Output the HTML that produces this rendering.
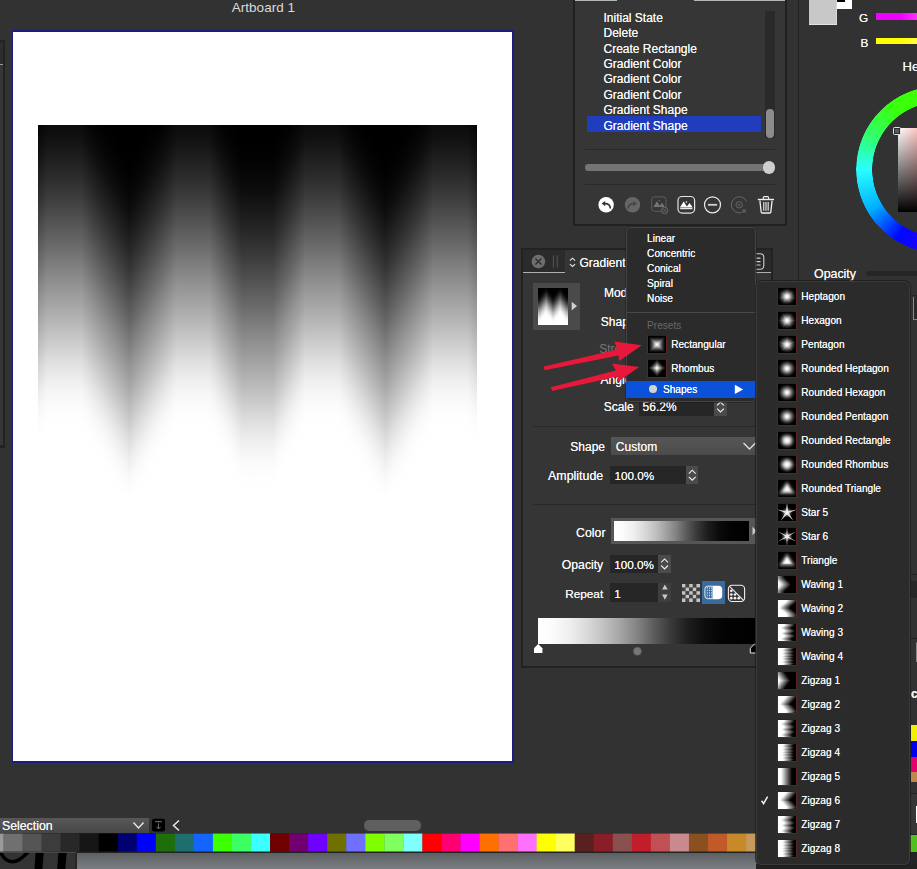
<!DOCTYPE html><html><head><meta charset="utf-8"><title>Gradient Shapes</title><style>
*{box-sizing:border-box;margin:0;padding:0}
html,body{width:917px;height:869px;overflow:hidden;background:#323232}
body{position:relative;font-family:"Liberation Sans",sans-serif;font-size:12px;color:#f2f2f2;line-height:1}
.a{position:absolute}
.t{position:absolute;white-space:nowrap;line-height:14px;height:14px;font-size:12px;color:#f4f4f4;text-shadow:0 0 .5px #f4f4f4}
.r{text-align:right}
.fld{position:absolute;background:#262626}
.stp{position:absolute;background:#4b4b4b}
.sep{position:absolute;height:1px;background:#282828}
.mi{position:absolute;white-space:nowrap;font-size:10.1px;line-height:12px;height:12px;color:#f6f6f6;margin-top:.9px;text-shadow:0 0 .25px #f6f6f6}
.ic{position:absolute;width:20px;height:20px;border:1px solid #5e2323;border-top-color:#3c1d1d;background:#000;overflow:hidden}
.ic svg{display:block}
</style></head><body>
<div class="t" style="left:163.4px;top:0.6px;width:200px;text-align:center;font-size:13.5px;color:#dadada;text-shadow:none">Artboard 1</div>
<div class="a" style="left:0;top:40px;width:5px;height:407.5px;background:#222"></div>
<div class="a" style="left:0;top:42px;width:3px;height:22px;background:#2d2d2d"></div>
<div class="a" style="left:0;top:64px;width:3px;height:1px;background:#9a9a9a"></div>
<div class="a" style="left:0;top:65px;width:3px;height:380px;background:#363636"></div>
<div class="a" style="left:11.7px;top:30.4px;width:502.1px;height:732.8px;background:#1d1d7c"></div><div class="a" style="left:13.1px;top:31.9px;width:498.8px;height:729.6px;background:#fff"></div>
<svg class="a" style="left:38.2px;top:124.8px" width="438.6" height="368.4" viewBox="38.2 124.8 438.6 368.4"><defs><linearGradient id="mg" gradientUnits="userSpaceOnUse" x1="0" y1="0" x2="0" y2="377.0"><stop offset="0.0" stop-color="rgb(0,0,0)"/><stop offset="0.05" stop-color="rgb(2,2,2)"/><stop offset="0.1" stop-color="rgb(7,7,7)"/><stop offset="0.15" stop-color="rgb(15,15,15)"/><stop offset="0.2" stop-color="rgb(27,27,27)"/><stop offset="0.25" stop-color="rgb(40,40,40)"/><stop offset="0.3" stop-color="rgb(55,55,55)"/><stop offset="0.35" stop-color="rgb(72,72,72)"/><stop offset="0.4" stop-color="rgb(90,90,90)"/><stop offset="0.45" stop-color="rgb(108,108,108)"/><stop offset="0.5" stop-color="rgb(128,128,128)"/><stop offset="0.55" stop-color="rgb(147,147,147)"/><stop offset="0.6" stop-color="rgb(165,165,165)"/><stop offset="0.65" stop-color="rgb(184,184,184)"/><stop offset="0.7" stop-color="rgb(203,203,203)"/><stop offset="0.75" stop-color="rgb(222,222,222)"/><stop offset="0.8" stop-color="rgb(238,238,238)"/><stop offset="0.85" stop-color="rgb(249,249,249)"/><stop offset="0.9" stop-color="rgb(254,254,254)"/><stop offset="0.95" stop-color="rgb(255,255,255)"/><stop offset="1.0" stop-color="rgb(255,255,255)"/></linearGradient></defs><rect x="0" y="-300" width="14.5" height="1200" fill="url(#mg)" transform="translate(34.60000000000002 101.10) skewY(-60.630)"/><rect x="0" y="-300" width="35.5" height="1200" fill="url(#mg)" transform="translate(47.60000000000002 78.00) skewY(0.000)"/><rect x="0" y="-300" width="49.5" height="1200" fill="url(#mg)" transform="translate(81.60000000000002 78.00) skewY(59.036)"/><rect x="0" y="-300" width="48.5" height="1200" fill="url(#mg)" transform="translate(129.60000000000002 158.00) skewY(-59.566)"/><rect x="0" y="-300" width="34.5" height="1200" fill="url(#mg)" transform="translate(176.60000000000002 78.00) skewY(0.000)"/><rect x="0" y="-300" width="33.900000000000006" height="1200" fill="url(#mg)" transform="translate(209.60000000000002 78.00) skewY(61.631)"/><rect x="0" y="-300" width="17.099999999999994" height="1200" fill="url(#mg)" transform="translate(242.00000000000003 138.00) skewY(0.000)"/><rect x="0" y="-300" width="17.100000000000023" height="1200" fill="url(#mg)" transform="translate(257.6 138.00) skewY(0.000)"/><rect x="0" y="-300" width="33.89999999999998" height="1200" fill="url(#mg)" transform="translate(273.20000000000005 138.00) skewY(-61.631)"/><rect x="0" y="-300" width="34.5" height="1200" fill="url(#mg)" transform="translate(305.6 78.00) skewY(0.000)"/><rect x="0" y="-300" width="48.5" height="1200" fill="url(#mg)" transform="translate(338.6 78.00) skewY(59.566)"/><rect x="0" y="-300" width="49.5" height="1200" fill="url(#mg)" transform="translate(385.6 158.00) skewY(-59.036)"/><rect x="0" y="-300" width="35.5" height="1200" fill="url(#mg)" transform="translate(433.6 78.00) skewY(0.000)"/><rect x="0" y="-300" width="14.5" height="1200" fill="url(#mg)" transform="translate(467.6 78.00) skewY(60.630)"/></svg>
<div class="a" style="left:0;top:818px;width:149px;height:15px;background:linear-gradient(#585858,#474747)"></div>
<div class="t" style="left:2px;top:819px;font-size:12.3px">Selection</div>
<svg class="a" style="left:130px;top:818px" width="70" height="15" viewBox="0 0 70 15"><path d="M3.5 4.5 L8.5 10 L13.5 4.5" fill="none" stroke="#e6e6e6" stroke-width="1.4"/><rect x="22" y="0.8" width="13" height="12.6" rx="2" fill="#000"/><path d="M25.3 3.6h6.4" stroke="#6e6e6e" stroke-width="1.2"/><path d="M28.5 5.3v5.5M26.3 8.7l2.2 2.2L30.7 8.7" fill="none" stroke="#6e6e6e" stroke-width="1"/><path d="M49 2.5 L43.5 7.5 L49 12.5" fill="none" stroke="#eaeaea" stroke-width="1.5"/></svg>
<div class="a" style="left:364px;top:820px;width:57px;height:11px;border-radius:5px;background:#5f5f5f"></div>
<svg class="a" style="left:0;top:833px" width="917" height="20" viewBox="0 0 917 20"><rect width="917" height="20" fill="#222"/><rect y="18.6" width="76" height="1.4" fill="#474747"/><rect x="0.00" y="0.5" width="3.80" height="18" fill="#9a9a9a"/><rect x="3.50" y="0.5" width="19.34" height="18" fill="#707070"/><rect x="22.54" y="0.5" width="19.34" height="18" fill="#555555"/><rect x="41.58" y="0.5" width="19.34" height="18" fill="#3c3c3c"/><rect x="60.62" y="0.5" width="19.34" height="18" fill="#282828"/><rect x="79.66" y="0.5" width="19.34" height="18" fill="#161616"/><rect x="98.70" y="0.5" width="19.34" height="18" fill="#000000"/><rect x="117.74" y="0.5" width="19.34" height="18" fill="#000070"/><rect x="136.78" y="0.5" width="19.34" height="18" fill="#0000ff"/><rect x="155.82" y="0.5" width="19.34" height="18" fill="#1e6e0a"/><rect x="174.86" y="0.5" width="19.34" height="18" fill="#1e6e6e"/><rect x="193.90" y="0.5" width="19.34" height="18" fill="#1464ff"/><rect x="212.94" y="0.5" width="19.34" height="18" fill="#3cff00"/><rect x="231.98" y="0.5" width="19.34" height="18" fill="#3cff64"/><rect x="251.02" y="0.5" width="19.34" height="18" fill="#3cffff"/><rect x="270.06" y="0.5" width="19.34" height="18" fill="#700000"/><rect x="289.10" y="0.5" width="19.34" height="18" fill="#700070"/><rect x="308.14" y="0.5" width="19.34" height="18" fill="#7000ff"/><rect x="327.18" y="0.5" width="19.34" height="18" fill="#707000"/><rect x="346.22" y="0.5" width="19.34" height="18" fill="#7070ff"/><rect x="365.26" y="0.5" width="19.34" height="18" fill="#80ff00"/><rect x="384.30" y="0.5" width="19.34" height="18" fill="#80ff60"/><rect x="403.34" y="0.5" width="19.34" height="18" fill="#80ffff"/><rect x="422.38" y="0.5" width="19.34" height="18" fill="#ff0000"/><rect x="441.42" y="0.5" width="19.34" height="18" fill="#ff0070"/><rect x="460.46" y="0.5" width="19.34" height="18" fill="#ff00ff"/><rect x="479.50" y="0.5" width="19.34" height="18" fill="#ff7000"/><rect x="498.54" y="0.5" width="19.34" height="18" fill="#ff7070"/><rect x="517.58" y="0.5" width="19.34" height="18" fill="#ff70ff"/><rect x="536.62" y="0.5" width="19.34" height="18" fill="#ffff00"/><rect x="555.66" y="0.5" width="19.34" height="18" fill="#ffff60"/><rect x="574.70" y="0.5" width="19.34" height="18" fill="#5a2020"/><rect x="593.74" y="0.5" width="19.34" height="18" fill="#8a1e28"/><rect x="612.78" y="0.5" width="19.34" height="18" fill="#8a5050"/><rect x="631.82" y="0.5" width="19.34" height="18" fill="#c01e2a"/><rect x="650.86" y="0.5" width="19.34" height="18" fill="#c05055"/><rect x="669.90" y="0.5" width="19.34" height="18" fill="#c88a8c"/><rect x="688.94" y="0.5" width="19.34" height="18" fill="#8a5020"/><rect x="707.98" y="0.5" width="19.34" height="18" fill="#c05a28"/><rect x="727.02" y="0.5" width="19.34" height="18" fill="#c88a28"/><rect x="746.06" y="0.5" width="19.34" height="18" fill="#c89a5a"/><rect x="765.10" y="0.5" width="19.34" height="18" fill="#c8a878"/><rect x="910" y="2" width="7" height="17" fill="#50c020"/></svg>
<div class="a" style="left:0;top:853px;width:77px;height:16px;background:#333"></div>
<div class="a" style="left:77px;top:853px;width:681px;height:16px;background:linear-gradient(#5c6062,#7b7f81)"></div><div class="a" style="left:758px;top:853px;width:159px;height:16px;background:#242424"></div>
<svg class="a" style="left:0;top:853px" width="77" height="16" viewBox="0 0 77 16"><path d="M0.5 -1.5 C3 5.5 8 9 13.5 8.6 C19 8.2 24 3.5 28.5 -1.5" fill="none" stroke="#000" stroke-width="3.5"/><path d="M35.5 0 L43.7 0 L42.4 16 L34.6 16Z" fill="#000"/><path d="M58.3 0 L66.6 0 L65.3 16 L57.2 16Z" fill="#000"/><rect x="75.2" y="0" width="1.8" height="16" fill="#262626"/></svg>
<div class="a" style="left:756px;top:864px;width:161px;height:5px;background:#222"></div>
<div class="a" style="left:573px;top:-2px;width:214px;height:228px;background:#363636;border:2px solid #212121"></div>
<div class="a" style="left:575px;top:0;width:42px;height:1px;background:#b4b4b4"></div>
<div class="a" style="left:694px;top:0;width:91px;height:1px;background:#b4b4b4"></div>
<div class="a" style="left:587px;top:116px;width:174px;height:16px;background:#1f3dbc"></div>
<div class="t" style="left:603.5px;top:10.8px">Initial State</div>
<div class="t" style="left:603.5px;top:26.2px">Delete</div>
<div class="t" style="left:603.5px;top:41.6px">Create Rectangle</div>
<div class="t" style="left:603.5px;top:57.0px">Gradient Color</div>
<div class="t" style="left:603.5px;top:72.4px">Gradient Color</div>
<div class="t" style="left:603.5px;top:87.8px">Gradient Color</div>
<div class="t" style="left:603.5px;top:103.2px">Gradient Shape</div>
<div class="t" style="left:603.5px;top:118.6px">Gradient Shape</div>
<div class="a" style="left:765px;top:11px;width:10px;height:127px;background:#2a2a2a"></div>
<div class="a" style="left:766px;top:109px;width:8px;height:29px;border-radius:4px;background:#8c8c8c"></div>
<div class="sep" style="left:585px;top:149px;width:190px"></div>
<div class="sep" style="left:585px;top:184px;width:190px"></div>
<div class="a" style="left:585px;top:164.4px;width:186px;height:6.6px;border-radius:3.3px;background:#747474"></div>
<div class="a" style="left:762.6px;top:161.4px;width:12.6px;height:12.6px;border-radius:6.3px;background:#cfcfcf"></div>
<svg class="a" style="left:594px;top:192px" width="190" height="26" viewBox="594 192 190 26"><circle cx="606.1" cy="204.7" r="7.7" fill="#fff"/><path d="M601.6 203.6 L605.2 200.9 L605.2 206.3Z" fill="#333"/><path d="M604.8 203.6 C608.5 203.4 610.3 205.4 610.3 208.4" fill="none" stroke="#333" stroke-width="1.7"/><circle cx="632.5" cy="204.7" r="7.7" fill="#666"/><path d="M637 203.6 L633.4 200.9 L633.4 206.3Z" fill="#454545"/><path d="M633.8 203.6 C630.1 203.4 628.3 205.4 628.3 208.4" fill="none" stroke="#454545" stroke-width="1.7"/><rect x="651.7" y="196.9" width="14.4" height="14.4" rx="3" fill="none" stroke="#5c5c5c" stroke-width="1"/><path d="M653.4 207 L657 201.2 L660.6 207Z M659.3 207 L662 202.6 L664.8 207Z" fill="#757575"/><circle cx="659.2" cy="200.8" r="0.7" fill="#757575"/><circle cx="664.6" cy="210.6" r="3.2" fill="#363636" stroke="#757575" stroke-width="0.8"/><path d="M663.1 209.1l3 3M666.1 209.1l-3 3" stroke="#757575" stroke-width="0.8"/><rect x="678" y="196.5" width="16.6" height="16.6" rx="4" fill="none" stroke="#e4e4e4" stroke-width="1.2"/><path d="M679.8 207.4 L683.7 201.6 L687.5 207.4Z M686.2 207.4 L689.5 203 L692.8 207.4Z" fill="#fff"/><circle cx="686.4" cy="202" r="0.8" fill="#fff"/><rect x="680.2" y="208.1" width="12.2" height="1.1" fill="#fff"/><circle cx="712.5" cy="204.8" r="8" fill="none" stroke="#ececec" stroke-width="1.2"/><rect x="708" y="203.9" width="9.1" height="1.8" fill="#d2d2d2"/><path d="M746.6 201.3 A8 8 0 1 0 741.5 212.5" fill="none" stroke="#686868" stroke-width="1"/><circle cx="739.2" cy="204.8" r="3.2" fill="none" stroke="#686868" stroke-width="1"/><circle cx="739.2" cy="204.8" r="1" fill="#686868"/><path d="M742.4 209.3l3.4 3.4M745.8 209.3l-3.4 3.4" stroke="#686868" stroke-width="1.1"/><path d="M763.3 199 V197.6 Q763.3 196.6 764.3 196.6 H767.6 Q768.6 196.6 768.6 197.6 V199" fill="none" stroke="#f0f0f0" stroke-width="1.1"/><rect x="757.8" y="198.8" width="16.2" height="1.4" fill="#f0f0f0"/><path d="M759.9 200.6 L761.2 212.2 Q761.3 213 762.2 213 H769.8 Q770.7 213 770.8 212.2 L772.1 200.6" fill="none" stroke="#f0f0f0" stroke-width="1.3"/><path d="M763.7 202 V210.8 M765.95 202 V210.8 M768.2 202 V210.8" stroke="#c8c8c8" stroke-width="1.4"/></svg>
<div class="a" style="left:797.5px;top:0;width:1.5px;height:869px;background:#212121"></div>
<div class="a" style="left:809px;top:0;width:27.5px;height:24.5px;background:#c8c8c8;border-bottom:1px solid #e2e2e2;border-right:1px solid #d8d8d8"></div>
<div class="a" style="left:836.5px;top:0;width:15.5px;height:9px;background:#fff"></div>
<div class="a" style="left:836.5px;top:0;width:8px;height:1.5px;background:#000"></div>
<div class="t" style="left:859px;top:10.8px;font-size:11.8px;text-shadow:0 0 .6px #fff">G</div>
<div class="t" style="left:860.5px;top:35.8px;font-size:11.8px;text-shadow:0 0 .6px #fff">B</div>
<div class="a" style="left:876px;top:13.4px;width:41px;height:6.4px;background:linear-gradient(90deg,#f000ff 60%,#ff30ff)"></div>
<div class="a" style="left:876px;top:38.2px;width:41px;height:6.2px;background:linear-gradient(90deg,#ffff00 60%,#ffff40)"></div>
<div class="t" style="left:902.5px;top:60px;font-size:13px">Hex</div>
<div class="a" style="left:855.5px;top:85.8px;width:167.2px;height:167.2px;border-radius:50%;background:conic-gradient(from 90deg,#ff0000,#ff00ff 55deg,#1c00ff 100deg,#0008ff 122deg,#00b0ff 150deg,#28ffff 180deg,#30ff70 205deg,#38ff10 232deg,#40ff00 262deg,#ffff00 305deg,#ff0000 360deg);-webkit-mask:radial-gradient(circle closest-side,transparent 67px,#000 67.6px,#000 83.2px,transparent 83.8px);mask:radial-gradient(circle closest-side,transparent 67px,#000 67.6px,#000 83.2px,transparent 83.8px)"></div>
<div class="a" style="left:898px;top:128px;width:84px;height:84px;background:linear-gradient(to bottom,rgba(0,0,0,0),#000),linear-gradient(to right,#fff,#f00)"></div>
<div class="a" style="left:893.3px;top:127.3px;width:8px;height:8px;border:1.2px solid #e4e4e4;border-radius:1.5px;outline:1px solid #2a2a2a;outline-offset:-2.2px;background:#5a5a5a"></div>
<div class="t" style="left:814px;top:266.8px;font-size:12.4px">Opacity</div>
<div class="a" style="left:866px;top:270.5px;width:60px;height:5px;border-radius:2.5px;background:#262626"></div>
<div class="a" style="left:911px;top:294.5px;width:6px;height:1px;background:#232323"></div>
<div class="a" style="left:913px;top:297px;width:6px;height:23px;background:#292929;border-left:1px solid #8a8a8a;border-bottom:1px solid #8a8a8a"></div>
<div class="a" style="left:911px;top:573.5px;width:6px;height:1px;background:#232323"></div>
<div class="a" style="left:911px;top:580.5px;width:6px;height:17px;background:#272727"></div>
<div class="a" style="left:911px;top:638px;width:6px;height:1px;background:#1f1f1f"></div>
<div class="a" style="left:915.5px;top:642px;width:4px;height:20px;border-left:1px solid #8a8a8a;border-bottom:1px solid #8a8a8a;border-top:1px solid #4a4a4a"></div>
<div class="t" style="left:911px;top:687px;font-weight:bold;font-size:12px">ci</div>
<div class="a" style="left:911px;top:724.5px;width:6px;height:16.3px;background:#f0f000"></div>
<div class="a" style="left:911px;top:740.8px;width:6px;height:16px;background:#0000f0"></div>
<div class="a" style="left:911px;top:756.8px;width:6px;height:15.5px;background:#e6006e"></div>
<div class="a" style="left:911px;top:772.3px;width:6px;height:10.2px;background:#c08848"></div>
<div class="a" style="left:911px;top:793px;width:6px;height:1px;background:#232323"></div>
<div class="a" style="left:911px;top:794px;width:6px;height:40px;background:#363636"></div>
<div class="a" style="left:916px;top:806px;width:1px;height:17px;background:#fff"></div>
<div class="a" style="left:521px;top:248px;width:252px;height:420px;background:#353535;border:2px solid #222"></div>
<div class="a" style="left:523px;top:250px;width:248px;height:22px;background:#2b2b2b"></div>
<div class="a" style="left:565px;top:250px;width:180px;height:23px;background:#353535"></div>
<div class="a" style="left:523px;top:272px;width:42px;height:1px;background:#b0b0b0"></div>
<div class="a" style="left:745px;top:272px;width:26px;height:1px;background:#b0b0b0"></div>
<svg class="a" style="left:523px;top:250px" width="248" height="22" viewBox="523 250 248 22"><circle cx="538.4" cy="261.5" r="6.8" fill="#6e6e6e"/><path d="M535.4 258.5l6 6M541.4 258.5l-6 6" stroke="#2b2b2b" stroke-width="1.3"/><path d="M553.4 255.3V267.6M557.2 255.3V267.6" stroke="#565656" stroke-width="1"/><path d="M569.9 260.6L572.5 258.2L575.1 260.6M569.9 264.1L572.5 266.5L575.1 264.1" fill="none" stroke="#e8e8e8" stroke-width="1.1"/><rect x="747.5" y="253.8" width="16.3" height="15.5" rx="3.5" fill="none" stroke="#d0d0d0" stroke-width="1.1"/><path d="M751 258.2H760.5M751 261.6H760.5M751 265H760.5" stroke="#d0d0d0" stroke-width="1.2"/></svg>
<div class="t" style="left:579.5px;top:256.2px;font-size:12px">Gradient</div>
<div class="a" style="left:532.7px;top:282.6px;width:47.5px;height:47.2px;background:#4a4a4a"></div>
<svg class="a" style="left:537.5px;top:287.5px" width="30.2" height="37.5" viewBox="537.5 287.5 30.2 37.5"><defs><linearGradient id="tg" gradientUnits="userSpaceOnUse" x1="0" y1="0" x2="0" y2="28"><stop offset="0.0" stop-color="rgb(0,0,0)"/><stop offset="0.1" stop-color="rgb(7,7,7)"/><stop offset="0.2" stop-color="rgb(27,27,27)"/><stop offset="0.3" stop-color="rgb(55,55,55)"/><stop offset="0.4" stop-color="rgb(90,90,90)"/><stop offset="0.5" stop-color="rgb(128,128,128)"/><stop offset="0.6" stop-color="rgb(165,165,165)"/><stop offset="0.7" stop-color="rgb(200,200,200)"/><stop offset="0.8" stop-color="rgb(228,228,228)"/><stop offset="0.9" stop-color="rgb(248,248,248)"/><stop offset="1.0" stop-color="rgb(255,255,255)"/></linearGradient></defs><rect x="0" y="-60" width="8.50" height="200" fill="url(#tg)" transform="translate(531.6 285.8) skewY(52.13)"/><rect x="0" y="-60" width="8.50" height="200" fill="url(#tg)" transform="translate(538.6 294.8) skewY(-52.13)"/><rect x="0" y="-60" width="8.50" height="200" fill="url(#tg)" transform="translate(545.6 285.8) skewY(52.13)"/><rect x="0" y="-60" width="8.50" height="200" fill="url(#tg)" transform="translate(552.6 294.8) skewY(-52.13)"/><rect x="0" y="-60" width="8.50" height="200" fill="url(#tg)" transform="translate(559.6 285.8) skewY(52.13)"/><rect x="0" y="-60" width="8.50" height="200" fill="url(#tg)" transform="translate(566.6 294.8) skewY(-52.13)"/></svg>
<svg class="a" style="left:571px;top:300px" width="7" height="12" viewBox="0 0 7 12"><path d="M0.7 1.7L6 6.1L0.7 10.5Z" fill="#cfcfcf"/></svg>
<div class="t" style="left:603.9px;top:286.1px">Mode</div>
<div class="t" style="left:600.8px;top:314.5px">Shape</div>
<div class="t" style="left:599.2px;top:342px;color:#777;text-shadow:none">Stretch</div>
<div class="t" style="left:600.6px;top:372.6px">Angle</div>
<div class="t" style="left:603.7px;top:400.1px">Scale</div>
<div class="fld" style="left:639px;top:398px;width:75px;height:18px"></div>
<div class="t" style="left:642.6px;top:400.1px">56.2%</div>
<div class="stp" style="left:714px;top:398px;width:13px;height:18px"><svg width="13" height="18" viewBox="0 0 13 18" style="display:block"><path d="M3.1 7.4L6.5 4.0L9.9 7.4M3.1 10.6L6.5 14.0L9.9 10.6" fill="none" stroke="#f0f0f0" stroke-width="1.1"/></svg></div>
<div class="sep" style="left:532.5px;top:426px;width:238px"></div>
<div class="t r" style="left:540px;width:65px;top:440.3px">Shape</div>
<div class="a" style="left:610.8px;top:437px;width:160px;height:18px;background:linear-gradient(#565656,#4b4b4b)"></div>
<div class="t" style="left:615.8px;top:440.3px">Custom</div>
<svg class="a" style="left:740px;top:440px" width="16" height="12" viewBox="0 0 16 12"><path d="M3.5 3L9.5 9L15.5 3" fill="none" stroke="#e0e0e0" stroke-width="1.3"/></svg>
<div class="t r" style="left:520px;width:83.2px;top:468.6px;font-size:12.4px">Amplitude</div>
<div class="fld" style="left:610px;top:465.5px;width:76px;height:18.4px"></div>
<div class="t" style="left:614.5px;top:468.6px;font-size:11.7px">100.0%</div>
<div class="stp" style="left:685.5px;top:465.5px;width:12.5px;height:18.4px"><svg width="12.5" height="18.4" viewBox="0 0 12.5 18.4" style="display:block"><path d="M2.85 7.6L6.25 4.199999999999999L9.65 7.6M2.85 10.799999999999999L6.25 14.2L9.65 10.799999999999999" fill="none" stroke="#f0f0f0" stroke-width="1.1"/></svg></div>
<div class="sep" style="left:532.5px;top:504px;width:238px"></div>
<div class="t r" style="left:540px;width:65.5px;top:525.6px;font-size:12.3px">Color</div>
<div class="a" style="left:610.8px;top:517.6px;width:160px;height:26.8px;background:#565656"></div>
<div class="a" style="left:614.2px;top:520.8px;width:135px;height:20px;background:linear-gradient(90deg,#fff 0%,#fcfcfc 6%,#eee 15%,#d8d8d8 23%,#bfbfbf 31%,#a4a4a4 38%,#828282 46%,#5e5e5e 53%,#3a3a3a 61%,#1e1e1e 69%,#0c0c0c 77%,#030303 86%,#000 100%)"></div>
<svg class="a" style="left:752px;top:526px" width="5" height="10" viewBox="0 0 5 10"><path d="M0.5 0.8L4.6 5L0.5 9.2Z" fill="#c8c8c8"/></svg>
<div class="t r" style="left:540px;width:63.2px;top:558px;font-size:12.2px">Opacity</div>
<div class="fld" style="left:610px;top:555.3px;width:48px;height:17.8px"></div>
<div class="t" style="left:614.3px;top:557.6px;font-size:11.7px">100.0%</div>
<div class="stp" style="left:657.6px;top:555.3px;width:13.2px;height:17.8px"><svg width="13.2" height="17.8" viewBox="0 0 13.2 17.8" style="display:block"><path d="M3.1999999999999997 7.300000000000001L6.6 3.9000000000000004L10.0 7.300000000000001M3.1999999999999997 10.5L6.6 13.9L10.0 10.5" fill="none" stroke="#f0f0f0" stroke-width="1.1"/></svg></div>
<div class="t r" style="left:540px;width:63.2px;top:587px;font-size:11.8px">Repeat</div>
<div class="fld" style="left:610px;top:583.2px;width:48px;height:18.6px"></div>
<div class="t" style="left:614.3px;top:586.6px;font-size:11.7px">1</div>
<div class="a" style="left:657.6px;top:583.2px;width:13.3px;height:18.6px;background:#3e3e3e"></div>
<svg class="a" style="left:657.6px;top:583.2px" width="13.3" height="18.6" viewBox="0 0 13.3 18.6"><path d="M4.1 6.6L6.9 1.5L9.7 6.6ZM4.1 11.6L6.9 16.8L9.7 11.6Z" fill="#c8c8c8"/></svg>
<svg class="a" style="left:681.7px;top:583.7px" width="18" height="18" viewBox="0 0 18 18"><rect x="0.0" y="0.0" width="3.65" height="3.65" fill="#c4c4c4"/><rect x="3.6" y="0.0" width="3.65" height="3.65" fill="#424242"/><rect x="7.2" y="0.0" width="3.65" height="3.65" fill="#c4c4c4"/><rect x="10.8" y="0.0" width="3.65" height="3.65" fill="#424242"/><rect x="14.4" y="0.0" width="3.65" height="3.65" fill="#c4c4c4"/><rect x="0.0" y="3.6" width="3.65" height="3.65" fill="#424242"/><rect x="3.6" y="3.6" width="3.65" height="3.65" fill="#c4c4c4"/><rect x="7.2" y="3.6" width="3.65" height="3.65" fill="#424242"/><rect x="10.8" y="3.6" width="3.65" height="3.65" fill="#c4c4c4"/><rect x="14.4" y="3.6" width="3.65" height="3.65" fill="#424242"/><rect x="0.0" y="7.2" width="3.65" height="3.65" fill="#c4c4c4"/><rect x="3.6" y="7.2" width="3.65" height="3.65" fill="#424242"/><rect x="7.2" y="7.2" width="3.65" height="3.65" fill="#c4c4c4"/><rect x="10.8" y="7.2" width="3.65" height="3.65" fill="#424242"/><rect x="14.4" y="7.2" width="3.65" height="3.65" fill="#c4c4c4"/><rect x="0.0" y="10.8" width="3.65" height="3.65" fill="#424242"/><rect x="3.6" y="10.8" width="3.65" height="3.65" fill="#c4c4c4"/><rect x="7.2" y="10.8" width="3.65" height="3.65" fill="#424242"/><rect x="10.8" y="10.8" width="3.65" height="3.65" fill="#c4c4c4"/><rect x="14.4" y="10.8" width="3.65" height="3.65" fill="#424242"/><rect x="0.0" y="14.4" width="3.65" height="3.65" fill="#c4c4c4"/><rect x="3.6" y="14.4" width="3.65" height="3.65" fill="#424242"/><rect x="7.2" y="14.4" width="3.65" height="3.65" fill="#c4c4c4"/><rect x="10.8" y="14.4" width="3.65" height="3.65" fill="#424242"/><rect x="14.4" y="14.4" width="3.65" height="3.65" fill="#c4c4c4"/></svg>
<div class="a" style="left:702px;top:581.3px;width:22.8px;height:22.8px;background:#3a6b9f"></div>
<svg class="a" style="left:702px;top:581.3px" width="22.8" height="22.8" viewBox="702 581.3 22.8 22.8"><path d="M712.5 586 H718.6 Q722.2 586 722.2 589.6 V595.9 Q722.2 599.5 718.6 599.5 H712.5Z" fill="#fff"/><path d="M712.5 586.5 H707.5 Q704.9 586.5 704.9 589.6 V595.9 Q704.9 599 707.5 599 H712.5" fill="none" stroke="#e8eef5" stroke-width="1"/><path d="M707.3 587.5V598" stroke="#dfe8f2" stroke-width="0.9" stroke-dasharray="1.5 1"/><path d="M709.5 587.5V598" stroke="#dfe8f2" stroke-width="0.9" stroke-dasharray="1.5 1"/><path d="M711.6 587.5V598" stroke="#dfe8f2" stroke-width="0.9" stroke-dasharray="1.5 1"/></svg>
<svg class="a" style="left:727px;top:583.5px" width="19" height="19" viewBox="727 583.5 19 19"><rect x="728.4" y="584.8" width="16.2" height="16.2" rx="3.6" fill="none" stroke="#f0f0f0" stroke-width="1.1"/><path d="M729.3 585.7L743.8 600.2" stroke="#f0f0f0" stroke-width="1.1"/><circle cx="731.3" cy="590.3" r="1.35" fill="#f0f0f0"/><circle cx="731.3" cy="594" r="1.35" fill="#f0f0f0"/><circle cx="731.3" cy="597.7" r="1.35" fill="#f0f0f0"/><circle cx="735" cy="594" r="1.35" fill="#f0f0f0"/><circle cx="735" cy="597.7" r="1.35" fill="#f0f0f0"/><circle cx="738.7" cy="597.7" r="1.35" fill="#f0f0f0"/></svg>
<div class="a" style="left:538.2px;top:617.8px;width:217px;height:25.8px;background:linear-gradient(90deg,#fff 0%,#fcfcfc 6%,#eee 15%,#d8d8d8 23%,#bfbfbf 31%,#a4a4a4 38%,#828282 46%,#5e5e5e 53%,#3a3a3a 61%,#1e1e1e 69%,#0c0c0c 77%,#030303 86%,#000 100%)"></div>
<svg class="a" style="left:532px;top:643px" width="230" height="14" viewBox="532 643 230 14"><path d="M534 648.2L538.2 644L542.4 648.2V653H534Z" fill="#fff"/><circle cx="637.4" cy="651.3" r="4" fill="#777" stroke="#5a5a5a" stroke-width="0.6"/><path d="M750.3 648.2L754.5 644L758.7 648.2V653H750.3Z" fill="#000" stroke="#e8e8e8" stroke-width="1"/></svg>
<div class="a" style="left:626px;top:227px;width:130px;height:174.5px;background:#2b2b2b;border-radius:4.5px;box-shadow:inset 0 0 0 1px rgba(255,255,255,.12),0 0 0 .5px #1c1c1c"></div>
<div class="mi" style="left:647.1px;top:232.3px">Linear</div>
<div class="mi" style="left:647.1px;top:247.3px">Concentric</div>
<div class="mi" style="left:647.1px;top:262.4px">Conical</div>
<div class="mi" style="left:647.1px;top:277.4px">Spiral</div>
<div class="mi" style="left:647.1px;top:292.4px">Noise</div>
<div class="a" style="left:626.5px;top:311.6px;width:129px;height:1px;background:#484848"></div>
<div class="mi" style="left:647.1px;top:319.4px;color:#686868;text-shadow:none">Presets</div>
<svg class="a" width="0" height="0" style="left:0;top:0"><defs><radialGradient id="gl"><stop offset="0" stop-color="#fff"/><stop offset=".1" stop-color="#fdfdfd"/><stop offset=".3" stop-color="#c0c0c0"/><stop offset=".5" stop-color="#747474"/><stop offset=".72" stop-color="#303030"/><stop offset=".9" stop-color="#0a0a0a"/><stop offset="1" stop-color="#000"/></radialGradient></defs></svg>
<div class="ic" style="left:647.3px;top:334.6px;height:19px"><div style="width:18px;height:17px;background:linear-gradient(90deg,rgb(0,0,0) 0%,rgb(0,0,0) 5%,rgb(36,36,36) 15%,rgb(92,92,92) 25%,rgb(165,165,165) 35%,rgb(228,228,228) 43%,rgb(255,255,255) 50%,rgb(228,228,228) 57%,rgb(165,165,165) 65%,rgb(92,92,92) 75%,rgb(36,36,36) 85%,rgb(0,0,0) 95%,rgb(0,0,0) 100%),linear-gradient(180deg,rgb(0,0,0) 0%,rgb(0,0,0) 5%,rgb(36,36,36) 15%,rgb(92,92,92) 25%,rgb(165,165,165) 35%,rgb(228,228,228) 43%,rgb(255,255,255) 50%,rgb(228,228,228) 57%,rgb(165,165,165) 65%,rgb(92,92,92) 75%,rgb(36,36,36) 85%,rgb(0,0,0) 95%,rgb(0,0,0) 100%);background-blend-mode:darken;"></div></div>
<div class="mi" style="left:671.2px;top:338.4px">Rectangular</div>
<div class="ic" style="left:647.3px;top:358.6px;height:19px"><div style="position:absolute;left:-9px;top:-8.5px;width:36px;height:34px;background:linear-gradient(90deg,#000 0%,rgb(0,0,0) 25.0%,rgb(0,0,0) 27.5%,rgb(36,36,36) 32.5%,rgb(92,92,92) 37.5%,rgb(165,165,165) 42.5%,rgb(228,228,228) 46.5%,rgb(255,255,255) 50.0%,rgb(228,228,228) 53.5%,rgb(165,165,165) 57.5%,rgb(92,92,92) 62.5%,rgb(36,36,36) 67.5%,rgb(0,0,0) 72.5%,rgb(0,0,0) 75.0%,#000 100%),linear-gradient(180deg,#000 0%,rgb(0,0,0) 25.0%,rgb(0,0,0) 27.5%,rgb(36,36,36) 32.5%,rgb(92,92,92) 37.5%,rgb(165,165,165) 42.5%,rgb(228,228,228) 46.5%,rgb(255,255,255) 50.0%,rgb(228,228,228) 53.5%,rgb(165,165,165) 57.5%,rgb(92,92,92) 62.5%,rgb(36,36,36) 67.5%,rgb(0,0,0) 72.5%,rgb(0,0,0) 75.0%,#000 100%);background-blend-mode:darken;transform:rotate(45deg) scale(.80,.847)"></div></div>
<div class="mi" style="left:671.2px;top:362.3px">Rhombus</div>
<div class="a" style="left:626px;top:381px;width:130px;height:17px;background:#0b51d9"></div>
<div class="a" style="left:649.2px;top:385.4px;width:7.4px;height:7.4px;border-radius:50%;background:#d2d2d2"></div>
<div class="mi" style="left:663px;top:382.8px;color:#fff">Shapes</div>
<svg class="a" style="left:734px;top:384px" width="10" height="11" viewBox="0 0 10 11"><path d="M0.8 0.8L9.2 5.4L0.8 10Z" fill="#fff"/></svg>
<svg class="a" style="left:530px;top:330px" width="130" height="70" viewBox="530 330 130 70"><path d="M543.9 366.6 L617.4 349.6 L614.3 341.5 L641.8 345.3 L619.2 361 L618.4 355.4 L544.4 370.2Z" fill="#e8183a"/><path d="M550.8 387.3 L616 370.6 L611.9 363.6 L639.3 367 L617.4 382.1 L617.6 376.4 L552 390.9Z" fill="#e8183a"/></svg>
<div class="a" style="left:756px;top:280.5px;width:154.2px;height:584px;background:#2b2b2b;border-radius:5.5px;box-shadow:inset 0 0 0 1px rgba(255,255,255,.08),0 0 0 .7px #1a1a1a"></div>
<div class="ic" style="left:777px;top:286.9px;height:19px"><svg width="18" height="17" viewBox="0 0 18 18" preserveAspectRatio="none"><rect width="18" height="18" fill="#000"/><rect width="18" height="18" fill="url(#gl)"/><polygon points="9.00,-0.50 9.56,7.83 16.43,3.08 10.27,8.71 18.26,11.11 10.02,9.81 13.12,17.56 9.00,10.30 4.88,17.56 7.98,9.81 -0.26,11.11 7.73,8.71 1.57,3.08 8.44,7.83" fill="#fff" opacity=".22" style="filter:blur(.6px)"/></svg></div>
<div class="mi" style="left:801.3px;top:290.3px">Heptagon</div>
<div class="ic" style="left:777px;top:310.9px;height:19px"><svg width="18" height="17" viewBox="0 0 18 18" preserveAspectRatio="none"><rect width="18" height="18" fill="#000"/><rect width="18" height="18" fill="url(#gl)"/><polygon points="18.50,9.00 10.13,9.65 13.75,17.23 9.00,10.30 4.25,17.23 7.87,9.65 -0.50,9.00 7.87,8.35 4.25,0.77 9.00,7.70 13.75,0.77 10.13,8.35" fill="#fff" opacity=".22" style="filter:blur(.6px)"/></svg></div>
<div class="mi" style="left:801.3px;top:314.3px">Hexagon</div>
<div class="ic" style="left:777px;top:334.9px;height:19px"><svg width="18" height="17" viewBox="0 0 18 18" preserveAspectRatio="none"><rect width="18" height="18" fill="#000"/><rect width="18" height="18" fill="url(#gl)"/><polygon points="9.00,-0.50 9.76,7.95 18.04,6.06 10.24,9.40 14.58,16.69 9.00,10.30 3.42,16.69 7.76,9.40 -0.04,6.06 8.24,7.95" fill="#fff" opacity=".22" style="filter:blur(.6px)"/></svg></div>
<div class="mi" style="left:801.3px;top:338.3px">Pentagon</div>
<div class="ic" style="left:777px;top:358.9px;height:19px"><svg width="18" height="17" viewBox="0 0 18 18" preserveAspectRatio="none"><rect width="18" height="18" fill="#000"/><rect width="18" height="18" fill="url(#gl)"/></svg></div>
<div class="mi" style="left:801.3px;top:362.3px">Rounded Heptagon</div>
<div class="ic" style="left:777px;top:382.9px;height:19px"><svg width="18" height="17" viewBox="0 0 18 18" preserveAspectRatio="none"><rect width="18" height="18" fill="#000"/><rect width="18" height="18" fill="url(#gl)"/></svg></div>
<div class="mi" style="left:801.3px;top:386.3px">Rounded Hexagon</div>
<div class="ic" style="left:777px;top:406.9px;height:19px"><svg width="18" height="17" viewBox="0 0 18 18" preserveAspectRatio="none"><rect width="18" height="18" fill="#000"/><rect width="18" height="18" fill="url(#gl)"/></svg></div>
<div class="mi" style="left:801.3px;top:410.3px">Rounded Pentagon</div>
<div class="ic" style="left:777px;top:430.9px;height:19px"><svg width="18" height="17" viewBox="0 0 18 18" preserveAspectRatio="none"><rect width="18" height="18" fill="#000"/><rect width="18" height="18" fill="url(#gl)"/><rect x="5" y="5" width="8" height="8" fill="#fff" opacity=".4" style="filter:blur(1.2px)"/></svg></div>
<div class="mi" style="left:801.3px;top:434.3px">Rounded Rectangle</div>
<div class="ic" style="left:777px;top:454.9px;height:19px"><svg width="18" height="17" viewBox="0 0 18 18" preserveAspectRatio="none"><rect width="18" height="18" fill="#000"/><rect width="18" height="18" fill="url(#gl)"/><polygon points="9,3.5 14.5,9 9,14.5 3.5,9" fill="#fff" opacity=".4" style="filter:blur(1.2px)"/></svg></div>
<div class="mi" style="left:801.3px;top:458.3px">Rounded Rhombus</div>
<div class="ic" style="left:777px;top:478.9px;height:19px"><svg width="18" height="17" viewBox="0 0 18 18" preserveAspectRatio="none"><rect width="18" height="18" fill="#000"/><polygon points="9,1.5 17,14.6 1,14.6" fill="#9a9a9a" style="filter:blur(1.8px)"/><polygon points="9,4.8 13.2,12.4 4.8,12.4" fill="#fff" style="filter:blur(1.3px)"/></svg></div>
<div class="mi" style="left:801.3px;top:482.3px">Rounded Triangle</div>
<div class="ic" style="left:777px;top:502.9px;height:19px"><svg width="18" height="17" viewBox="0 0 18 18" preserveAspectRatio="none"><rect width="18" height="18" fill="#000"/><circle cx="9" cy="9" r="6" fill="url(#gl)" opacity=".8"/><polygon points="9.00,-1.50 10.18,7.38 18.99,5.76 10.90,9.62 15.17,17.49 9.00,11.00 2.83,17.49 7.10,9.62 -0.99,5.76 7.82,7.38" fill="#fff" opacity=".8" style="filter:blur(.5px)"/></svg></div>
<div class="mi" style="left:801.3px;top:506.3px">Star 5</div>
<div class="ic" style="left:777px;top:526.9px;height:19px"><svg width="18" height="17" viewBox="0 0 18 18" preserveAspectRatio="none"><rect width="18" height="18" fill="#000"/><circle cx="9" cy="9" r="6" fill="url(#gl)" opacity=".8"/><polygon points="9.00,-1.50 9.70,7.79 18.09,3.75 10.40,9.00 18.09,14.25 9.70,10.21 9.00,19.50 8.30,10.21 -0.09,14.25 7.60,9.00 -0.09,3.75 8.30,7.79" fill="#fff" opacity=".8" style="filter:blur(.5px)"/></svg></div>
<div class="mi" style="left:801.3px;top:530.3px">Star 6</div>
<div class="ic" style="left:777px;top:550.9px;height:19px"><svg width="18" height="17" viewBox="0 0 18 18" preserveAspectRatio="none"><rect width="18" height="18" fill="#000"/><polygon points="9,1.5 17,14.6 1,14.6" fill="#9a9a9a" style="filter:blur(1.8px)"/><polygon points="9,4.8 13.2,12.4 4.8,12.4" fill="#fff" style="filter:blur(0.8px)"/></svg></div>
<div class="mi" style="left:801.3px;top:554.3px">Triangle</div>
<div class="ic" style="left:777px;top:574.9px;height:19px"><svg width="18" height="17" viewBox="0 0 18 18" preserveAspectRatio="none"><defs><linearGradient id="w12" gradientUnits="userSpaceOnUse" x1="0" y1="0" x2="12" y2="0"><stop offset="0" stop-color="#fff"/><stop offset=".1" stop-color="#f2f2f2"/><stop offset=".5" stop-color="#7e7e7e"/><stop offset=".9" stop-color="#0e0e0e"/><stop offset="1" stop-color="#000"/></linearGradient></defs><rect width="18" height="18" fill="#000"/><g shape-rendering="crispEdges"><rect x="-20" y="0" width="60" height="1.1" fill="url(#w12)" transform="translate(-4.94 0)"/><rect x="-20" y="1" width="60" height="1.1" fill="url(#w12)" transform="translate(-4.55 0)"/><rect x="-20" y="2" width="60" height="1.1" fill="url(#w12)" transform="translate(-3.83 0)"/><rect x="-20" y="3" width="60" height="1.1" fill="url(#w12)" transform="translate(-2.86 0)"/><rect x="-20" y="4" width="60" height="1.1" fill="url(#w12)" transform="translate(-1.75 0)"/><rect x="-20" y="5" width="60" height="1.1" fill="url(#w12)" transform="translate(-0.64 0)"/><rect x="-20" y="6" width="60" height="1.1" fill="url(#w12)" transform="translate(0.33 0)"/><rect x="-20" y="7" width="60" height="1.1" fill="url(#w12)" transform="translate(1.05 0)"/><rect x="-20" y="8" width="60" height="1.1" fill="url(#w12)" transform="translate(1.44 0)"/><rect x="-20" y="9" width="60" height="1.1" fill="url(#w12)" transform="translate(1.44 0)"/><rect x="-20" y="10" width="60" height="1.1" fill="url(#w12)" transform="translate(1.05 0)"/><rect x="-20" y="11" width="60" height="1.1" fill="url(#w12)" transform="translate(0.33 0)"/><rect x="-20" y="12" width="60" height="1.1" fill="url(#w12)" transform="translate(-0.64 0)"/><rect x="-20" y="13" width="60" height="1.1" fill="url(#w12)" transform="translate(-1.75 0)"/><rect x="-20" y="14" width="60" height="1.1" fill="url(#w12)" transform="translate(-2.86 0)"/><rect x="-20" y="15" width="60" height="1.1" fill="url(#w12)" transform="translate(-3.83 0)"/><rect x="-20" y="16" width="60" height="1.1" fill="url(#w12)" transform="translate(-4.55 0)"/><rect x="-20" y="17" width="60" height="1.1" fill="url(#w12)" transform="translate(-4.94 0)"/></g></svg></div>
<div class="mi" style="left:801.3px;top:578.3px">Waving 1</div>
<div class="ic" style="left:777px;top:598.9px;height:19px"><svg width="18" height="17" viewBox="0 0 18 18" preserveAspectRatio="none"><defs><linearGradient id="w13" gradientUnits="userSpaceOnUse" x1="0" y1="0" x2="12" y2="0"><stop offset="0" stop-color="#fff"/><stop offset=".1" stop-color="#f2f2f2"/><stop offset=".5" stop-color="#7e7e7e"/><stop offset=".9" stop-color="#0e0e0e"/><stop offset="1" stop-color="#000"/></linearGradient></defs><rect width="18" height="18" fill="#000"/><g shape-rendering="crispEdges"><rect x="-20" y="0" width="60" height="1.1" fill="url(#w13)" transform="translate(7.92 0)"/><rect x="-20" y="1" width="60" height="1.1" fill="url(#w13)" transform="translate(7.42 0)"/><rect x="-20" y="2" width="60" height="1.1" fill="url(#w13)" transform="translate(6.50 0)"/><rect x="-20" y="3" width="60" height="1.1" fill="url(#w13)" transform="translate(5.28 0)"/><rect x="-20" y="4" width="60" height="1.1" fill="url(#w13)" transform="translate(3.96 0)"/><rect x="-20" y="5" width="60" height="1.1" fill="url(#w13)" transform="translate(2.71 0)"/><rect x="-20" y="6" width="60" height="1.1" fill="url(#w13)" transform="translate(1.72 0)"/><rect x="-20" y="7" width="60" height="1.1" fill="url(#w13)" transform="translate(1.13 0)"/><rect x="-20" y="8" width="60" height="1.1" fill="url(#w13)" transform="translate(1.04 0)"/><rect x="-20" y="9" width="60" height="1.1" fill="url(#w13)" transform="translate(1.45 0)"/><rect x="-20" y="10" width="60" height="1.1" fill="url(#w13)" transform="translate(2.31 0)"/><rect x="-20" y="11" width="60" height="1.1" fill="url(#w13)" transform="translate(3.48 0)"/><rect x="-20" y="12" width="60" height="1.1" fill="url(#w13)" transform="translate(4.80 0)"/><rect x="-20" y="13" width="60" height="1.1" fill="url(#w13)" transform="translate(6.08 0)"/><rect x="-20" y="14" width="60" height="1.1" fill="url(#w13)" transform="translate(7.13 0)"/><rect x="-20" y="15" width="60" height="1.1" fill="url(#w13)" transform="translate(7.79 0)"/><rect x="-20" y="16" width="60" height="1.1" fill="url(#w13)" transform="translate(7.98 0)"/><rect x="-20" y="17" width="60" height="1.1" fill="url(#w13)" transform="translate(7.66 0)"/></g></svg></div>
<div class="mi" style="left:801.3px;top:602.3px">Waving 2</div>
<div class="ic" style="left:777px;top:622.9px;height:19px"><svg width="18" height="17" viewBox="0 0 18 18" preserveAspectRatio="none"><defs><linearGradient id="w14" gradientUnits="userSpaceOnUse" x1="0" y1="0" x2="12" y2="0"><stop offset="0" stop-color="#fff"/><stop offset=".1" stop-color="#f2f2f2"/><stop offset=".5" stop-color="#7e7e7e"/><stop offset=".9" stop-color="#0e0e0e"/><stop offset="1" stop-color="#000"/></linearGradient></defs><rect width="18" height="18" fill="#000"/><g shape-rendering="crispEdges"><rect x="-20" y="0" width="60" height="1.1" fill="url(#w14)" transform="translate(5.53 0)"/><rect x="-20" y="1" width="60" height="1.1" fill="url(#w14)" transform="translate(5.51 0)"/><rect x="-20" y="2" width="60" height="1.1" fill="url(#w14)" transform="translate(4.08 0)"/><rect x="-20" y="3" width="60" height="1.1" fill="url(#w14)" transform="translate(2.67 0)"/><rect x="-20" y="4" width="60" height="1.1" fill="url(#w14)" transform="translate(2.69 0)"/><rect x="-20" y="5" width="60" height="1.1" fill="url(#w14)" transform="translate(4.12 0)"/><rect x="-20" y="6" width="60" height="1.1" fill="url(#w14)" transform="translate(5.53 0)"/><rect x="-20" y="7" width="60" height="1.1" fill="url(#w14)" transform="translate(5.51 0)"/><rect x="-20" y="8" width="60" height="1.1" fill="url(#w14)" transform="translate(4.08 0)"/><rect x="-20" y="9" width="60" height="1.1" fill="url(#w14)" transform="translate(2.67 0)"/><rect x="-20" y="10" width="60" height="1.1" fill="url(#w14)" transform="translate(2.69 0)"/><rect x="-20" y="11" width="60" height="1.1" fill="url(#w14)" transform="translate(4.12 0)"/><rect x="-20" y="12" width="60" height="1.1" fill="url(#w14)" transform="translate(5.53 0)"/><rect x="-20" y="13" width="60" height="1.1" fill="url(#w14)" transform="translate(5.51 0)"/><rect x="-20" y="14" width="60" height="1.1" fill="url(#w14)" transform="translate(4.08 0)"/><rect x="-20" y="15" width="60" height="1.1" fill="url(#w14)" transform="translate(2.67 0)"/><rect x="-20" y="16" width="60" height="1.1" fill="url(#w14)" transform="translate(2.69 0)"/><rect x="-20" y="17" width="60" height="1.1" fill="url(#w14)" transform="translate(4.12 0)"/></g></svg></div>
<div class="mi" style="left:801.3px;top:626.3px">Waving 3</div>
<div class="ic" style="left:777px;top:646.9px;height:19px"><svg width="18" height="17" viewBox="0 0 18 18" preserveAspectRatio="none"><defs><linearGradient id="w15" gradientUnits="userSpaceOnUse" x1="0" y1="0" x2="12" y2="0"><stop offset="0" stop-color="#fff"/><stop offset=".1" stop-color="#f2f2f2"/><stop offset=".5" stop-color="#7e7e7e"/><stop offset=".9" stop-color="#0e0e0e"/><stop offset="1" stop-color="#000"/></linearGradient></defs><rect width="18" height="18" fill="#000"/><g shape-rendering="crispEdges"><rect x="-20" y="0" width="60" height="1.1" fill="url(#w15)" transform="translate(5.08 0)"/><rect x="-20" y="1" width="60" height="1.1" fill="url(#w15)" transform="translate(3.93 0)"/><rect x="-20" y="2" width="60" height="1.1" fill="url(#w15)" transform="translate(3.52 0)"/><rect x="-20" y="3" width="60" height="1.1" fill="url(#w15)" transform="translate(4.98 0)"/><rect x="-20" y="4" width="60" height="1.1" fill="url(#w15)" transform="translate(4.30 0)"/><rect x="-20" y="5" width="60" height="1.1" fill="url(#w15)" transform="translate(3.35 0)"/><rect x="-20" y="6" width="60" height="1.1" fill="url(#w15)" transform="translate(4.74 0)"/><rect x="-20" y="7" width="60" height="1.1" fill="url(#w15)" transform="translate(4.65 0)"/><rect x="-20" y="8" width="60" height="1.1" fill="url(#w15)" transform="translate(3.33 0)"/><rect x="-20" y="9" width="60" height="1.1" fill="url(#w15)" transform="translate(4.41 0)"/><rect x="-20" y="10" width="60" height="1.1" fill="url(#w15)" transform="translate(4.92 0)"/><rect x="-20" y="11" width="60" height="1.1" fill="url(#w15)" transform="translate(3.46 0)"/><rect x="-20" y="12" width="60" height="1.1" fill="url(#w15)" transform="translate(4.04 0)"/><rect x="-20" y="13" width="60" height="1.1" fill="url(#w15)" transform="translate(5.07 0)"/><rect x="-20" y="14" width="60" height="1.1" fill="url(#w15)" transform="translate(3.71 0)"/><rect x="-20" y="15" width="60" height="1.1" fill="url(#w15)" transform="translate(3.70 0)"/><rect x="-20" y="16" width="60" height="1.1" fill="url(#w15)" transform="translate(5.06 0)"/><rect x="-20" y="17" width="60" height="1.1" fill="url(#w15)" transform="translate(4.05 0)"/></g></svg></div>
<div class="mi" style="left:801.3px;top:650.3px">Waving 4</div>
<div class="ic" style="left:777px;top:670.9px;height:19px"><svg width="18" height="17" viewBox="0 0 18 18" preserveAspectRatio="none"><defs><linearGradient id="w16" gradientUnits="userSpaceOnUse" x1="0" y1="0" x2="12" y2="0"><stop offset="0" stop-color="#fff"/><stop offset=".1" stop-color="#f2f2f2"/><stop offset=".5" stop-color="#7e7e7e"/><stop offset=".9" stop-color="#0e0e0e"/><stop offset="1" stop-color="#000"/></linearGradient></defs><rect width="18" height="18" fill="#000"/><g shape-rendering="crispEdges"><rect x="-20" y="0" width="60" height="1.1" fill="url(#w16)" transform="translate(-4.64 0)"/><rect x="-20" y="1" width="60" height="1.1" fill="url(#w16)" transform="translate(-3.92 0)"/><rect x="-20" y="2" width="60" height="1.1" fill="url(#w16)" transform="translate(-3.19 0)"/><rect x="-20" y="3" width="60" height="1.1" fill="url(#w16)" transform="translate(-2.47 0)"/><rect x="-20" y="4" width="60" height="1.1" fill="url(#w16)" transform="translate(-1.75 0)"/><rect x="-20" y="5" width="60" height="1.1" fill="url(#w16)" transform="translate(-1.03 0)"/><rect x="-20" y="6" width="60" height="1.1" fill="url(#w16)" transform="translate(-0.31 0)"/><rect x="-20" y="7" width="60" height="1.1" fill="url(#w16)" transform="translate(0.42 0)"/><rect x="-20" y="8" width="60" height="1.1" fill="url(#w16)" transform="translate(1.14 0)"/><rect x="-20" y="9" width="60" height="1.1" fill="url(#w16)" transform="translate(1.14 0)"/><rect x="-20" y="10" width="60" height="1.1" fill="url(#w16)" transform="translate(0.42 0)"/><rect x="-20" y="11" width="60" height="1.1" fill="url(#w16)" transform="translate(-0.31 0)"/><rect x="-20" y="12" width="60" height="1.1" fill="url(#w16)" transform="translate(-1.03 0)"/><rect x="-20" y="13" width="60" height="1.1" fill="url(#w16)" transform="translate(-1.75 0)"/><rect x="-20" y="14" width="60" height="1.1" fill="url(#w16)" transform="translate(-2.47 0)"/><rect x="-20" y="15" width="60" height="1.1" fill="url(#w16)" transform="translate(-3.19 0)"/><rect x="-20" y="16" width="60" height="1.1" fill="url(#w16)" transform="translate(-3.92 0)"/><rect x="-20" y="17" width="60" height="1.1" fill="url(#w16)" transform="translate(-4.64 0)"/></g></svg></div>
<div class="mi" style="left:801.3px;top:674.3px">Zigzag 1</div>
<div class="ic" style="left:777px;top:694.9px;height:19px"><svg width="18" height="17" viewBox="0 0 18 18" preserveAspectRatio="none"><defs><linearGradient id="w17" gradientUnits="userSpaceOnUse" x1="0" y1="0" x2="12" y2="0"><stop offset="0" stop-color="#fff"/><stop offset=".1" stop-color="#f2f2f2"/><stop offset=".5" stop-color="#7e7e7e"/><stop offset=".9" stop-color="#0e0e0e"/><stop offset="1" stop-color="#000"/></linearGradient></defs><rect width="18" height="18" fill="#000"/><g shape-rendering="crispEdges"><rect x="-20" y="0" width="60" height="1.1" fill="url(#w17)" transform="translate(7.57 0)"/><rect x="-20" y="1" width="60" height="1.1" fill="url(#w17)" transform="translate(6.72 0)"/><rect x="-20" y="2" width="60" height="1.1" fill="url(#w17)" transform="translate(5.86 0)"/><rect x="-20" y="3" width="60" height="1.1" fill="url(#w17)" transform="translate(5.01 0)"/><rect x="-20" y="4" width="60" height="1.1" fill="url(#w17)" transform="translate(4.15 0)"/><rect x="-20" y="5" width="60" height="1.1" fill="url(#w17)" transform="translate(3.29 0)"/><rect x="-20" y="6" width="60" height="1.1" fill="url(#w17)" transform="translate(2.44 0)"/><rect x="-20" y="7" width="60" height="1.1" fill="url(#w17)" transform="translate(1.58 0)"/><rect x="-20" y="8" width="60" height="1.1" fill="url(#w17)" transform="translate(1.27 0)"/><rect x="-20" y="9" width="60" height="1.1" fill="url(#w17)" transform="translate(2.13 0)"/><rect x="-20" y="10" width="60" height="1.1" fill="url(#w17)" transform="translate(2.98 0)"/><rect x="-20" y="11" width="60" height="1.1" fill="url(#w17)" transform="translate(3.84 0)"/><rect x="-20" y="12" width="60" height="1.1" fill="url(#w17)" transform="translate(4.69 0)"/><rect x="-20" y="13" width="60" height="1.1" fill="url(#w17)" transform="translate(5.55 0)"/><rect x="-20" y="14" width="60" height="1.1" fill="url(#w17)" transform="translate(6.41 0)"/><rect x="-20" y="15" width="60" height="1.1" fill="url(#w17)" transform="translate(7.26 0)"/><rect x="-20" y="16" width="60" height="1.1" fill="url(#w17)" transform="translate(7.79 0)"/><rect x="-20" y="17" width="60" height="1.1" fill="url(#w17)" transform="translate(7.03 0)"/></g></svg></div>
<div class="mi" style="left:801.3px;top:698.3px">Zigzag 2</div>
<div class="ic" style="left:777px;top:718.9px;height:19px"><svg width="18" height="17" viewBox="0 0 18 18" preserveAspectRatio="none"><defs><linearGradient id="w18" gradientUnits="userSpaceOnUse" x1="0" y1="0" x2="12" y2="0"><stop offset="0" stop-color="#fff"/><stop offset=".1" stop-color="#f2f2f2"/><stop offset=".5" stop-color="#7e7e7e"/><stop offset=".9" stop-color="#0e0e0e"/><stop offset="1" stop-color="#000"/></linearGradient></defs><rect width="18" height="18" fill="#000"/><g shape-rendering="crispEdges"><rect x="-20" y="0" width="60" height="1.1" fill="url(#w18)" transform="translate(5.24 0)"/><rect x="-20" y="1" width="60" height="1.1" fill="url(#w18)" transform="translate(5.22 0)"/><rect x="-20" y="2" width="60" height="1.1" fill="url(#w18)" transform="translate(4.09 0)"/><rect x="-20" y="3" width="60" height="1.1" fill="url(#w18)" transform="translate(2.96 0)"/><rect x="-20" y="4" width="60" height="1.1" fill="url(#w18)" transform="translate(2.98 0)"/><rect x="-20" y="5" width="60" height="1.1" fill="url(#w18)" transform="translate(4.11 0)"/><rect x="-20" y="6" width="60" height="1.1" fill="url(#w18)" transform="translate(5.24 0)"/><rect x="-20" y="7" width="60" height="1.1" fill="url(#w18)" transform="translate(5.22 0)"/><rect x="-20" y="8" width="60" height="1.1" fill="url(#w18)" transform="translate(4.09 0)"/><rect x="-20" y="9" width="60" height="1.1" fill="url(#w18)" transform="translate(2.96 0)"/><rect x="-20" y="10" width="60" height="1.1" fill="url(#w18)" transform="translate(2.98 0)"/><rect x="-20" y="11" width="60" height="1.1" fill="url(#w18)" transform="translate(4.11 0)"/><rect x="-20" y="12" width="60" height="1.1" fill="url(#w18)" transform="translate(5.24 0)"/><rect x="-20" y="13" width="60" height="1.1" fill="url(#w18)" transform="translate(5.22 0)"/><rect x="-20" y="14" width="60" height="1.1" fill="url(#w18)" transform="translate(4.09 0)"/><rect x="-20" y="15" width="60" height="1.1" fill="url(#w18)" transform="translate(2.96 0)"/><rect x="-20" y="16" width="60" height="1.1" fill="url(#w18)" transform="translate(2.98 0)"/><rect x="-20" y="17" width="60" height="1.1" fill="url(#w18)" transform="translate(4.11 0)"/></g></svg></div>
<div class="mi" style="left:801.3px;top:722.3px">Zigzag 3</div>
<div class="ic" style="left:777px;top:742.9px;height:19px"><svg width="18" height="17" viewBox="0 0 18 18" preserveAspectRatio="none"><defs><linearGradient id="w19" gradientUnits="userSpaceOnUse" x1="0" y1="0" x2="12" y2="0"><stop offset="0" stop-color="#fff"/><stop offset=".1" stop-color="#f2f2f2"/><stop offset=".5" stop-color="#7e7e7e"/><stop offset=".9" stop-color="#0e0e0e"/><stop offset="1" stop-color="#000"/></linearGradient></defs><rect width="18" height="18" fill="#000"/><g shape-rendering="crispEdges"><rect x="-20" y="0" width="60" height="1.1" fill="url(#w19)" transform="translate(4.89 0)"/><rect x="-20" y="1" width="60" height="1.1" fill="url(#w19)" transform="translate(4.01 0)"/><rect x="-20" y="2" width="60" height="1.1" fill="url(#w19)" transform="translate(3.64 0)"/><rect x="-20" y="3" width="60" height="1.1" fill="url(#w19)" transform="translate(4.88 0)"/><rect x="-20" y="4" width="60" height="1.1" fill="url(#w19)" transform="translate(4.27 0)"/><rect x="-20" y="5" width="60" height="1.1" fill="url(#w19)" transform="translate(3.51 0)"/><rect x="-20" y="6" width="60" height="1.1" fill="url(#w19)" transform="translate(4.62 0)"/><rect x="-20" y="7" width="60" height="1.1" fill="url(#w19)" transform="translate(4.54 0)"/><rect x="-20" y="8" width="60" height="1.1" fill="url(#w19)" transform="translate(3.51 0)"/><rect x="-20" y="9" width="60" height="1.1" fill="url(#w19)" transform="translate(4.35 0)"/><rect x="-20" y="10" width="60" height="1.1" fill="url(#w19)" transform="translate(4.81 0)"/><rect x="-20" y="11" width="60" height="1.1" fill="url(#w19)" transform="translate(3.56 0)"/><rect x="-20" y="12" width="60" height="1.1" fill="url(#w19)" transform="translate(4.08 0)"/><rect x="-20" y="13" width="60" height="1.1" fill="url(#w19)" transform="translate(4.89 0)"/><rect x="-20" y="14" width="60" height="1.1" fill="url(#w19)" transform="translate(3.83 0)"/><rect x="-20" y="15" width="60" height="1.1" fill="url(#w19)" transform="translate(3.82 0)"/><rect x="-20" y="16" width="60" height="1.1" fill="url(#w19)" transform="translate(4.89 0)"/><rect x="-20" y="17" width="60" height="1.1" fill="url(#w19)" transform="translate(4.09 0)"/></g></svg></div>
<div class="mi" style="left:801.3px;top:746.3px">Zigzag 4</div>
<div class="ic" style="left:777px;top:766.9px;height:19px"><svg width="18" height="17" viewBox="0 0 18 18" preserveAspectRatio="none"><defs><linearGradient id="w20" gradientUnits="userSpaceOnUse" x1="0" y1="0" x2="12" y2="0"><stop offset="0" stop-color="#fff"/><stop offset=".1" stop-color="#f2f2f2"/><stop offset=".5" stop-color="#7e7e7e"/><stop offset=".9" stop-color="#0e0e0e"/><stop offset="1" stop-color="#000"/></linearGradient></defs><rect width="18" height="18" fill="#000"/><g shape-rendering="crispEdges"><rect x="-20" y="0" width="60" height="1.1" fill="url(#w20)" transform="translate(2.50 0)"/><rect x="-20" y="1" width="60" height="1.1" fill="url(#w20)" transform="translate(2.50 0)"/><rect x="-20" y="2" width="60" height="1.1" fill="url(#w20)" transform="translate(2.50 0)"/><rect x="-20" y="3" width="60" height="1.1" fill="url(#w20)" transform="translate(2.50 0)"/><rect x="-20" y="4" width="60" height="1.1" fill="url(#w20)" transform="translate(2.50 0)"/><rect x="-20" y="5" width="60" height="1.1" fill="url(#w20)" transform="translate(2.50 0)"/><rect x="-20" y="6" width="60" height="1.1" fill="url(#w20)" transform="translate(2.50 0)"/><rect x="-20" y="7" width="60" height="1.1" fill="url(#w20)" transform="translate(2.50 0)"/><rect x="-20" y="8" width="60" height="1.1" fill="url(#w20)" transform="translate(2.50 0)"/><rect x="-20" y="9" width="60" height="1.1" fill="url(#w20)" transform="translate(2.50 0)"/><rect x="-20" y="10" width="60" height="1.1" fill="url(#w20)" transform="translate(2.50 0)"/><rect x="-20" y="11" width="60" height="1.1" fill="url(#w20)" transform="translate(2.50 0)"/><rect x="-20" y="12" width="60" height="1.1" fill="url(#w20)" transform="translate(2.50 0)"/><rect x="-20" y="13" width="60" height="1.1" fill="url(#w20)" transform="translate(2.50 0)"/><rect x="-20" y="14" width="60" height="1.1" fill="url(#w20)" transform="translate(2.50 0)"/><rect x="-20" y="15" width="60" height="1.1" fill="url(#w20)" transform="translate(2.50 0)"/><rect x="-20" y="16" width="60" height="1.1" fill="url(#w20)" transform="translate(2.50 0)"/><rect x="-20" y="17" width="60" height="1.1" fill="url(#w20)" transform="translate(2.50 0)"/></g></svg></div>
<div class="mi" style="left:801.3px;top:770.3px">Zigzag 5</div>
<div class="ic" style="left:777px;top:790.9px;height:19px"><svg width="18" height="17" viewBox="0 0 18 18" preserveAspectRatio="none"><defs><linearGradient id="w21" gradientUnits="userSpaceOnUse" x1="0" y1="0" x2="12" y2="0"><stop offset="0" stop-color="#fff"/><stop offset=".1" stop-color="#f2f2f2"/><stop offset=".5" stop-color="#7e7e7e"/><stop offset=".9" stop-color="#0e0e0e"/><stop offset="1" stop-color="#000"/></linearGradient></defs><rect width="18" height="18" fill="#000"/><g shape-rendering="crispEdges"><rect x="-20" y="0" width="60" height="1.1" fill="url(#w21)" transform="translate(7.57 0)"/><rect x="-20" y="1" width="60" height="1.1" fill="url(#w21)" transform="translate(6.72 0)"/><rect x="-20" y="2" width="60" height="1.1" fill="url(#w21)" transform="translate(5.86 0)"/><rect x="-20" y="3" width="60" height="1.1" fill="url(#w21)" transform="translate(5.01 0)"/><rect x="-20" y="4" width="60" height="1.1" fill="url(#w21)" transform="translate(4.15 0)"/><rect x="-20" y="5" width="60" height="1.1" fill="url(#w21)" transform="translate(3.29 0)"/><rect x="-20" y="6" width="60" height="1.1" fill="url(#w21)" transform="translate(2.44 0)"/><rect x="-20" y="7" width="60" height="1.1" fill="url(#w21)" transform="translate(1.58 0)"/><rect x="-20" y="8" width="60" height="1.1" fill="url(#w21)" transform="translate(1.27 0)"/><rect x="-20" y="9" width="60" height="1.1" fill="url(#w21)" transform="translate(2.13 0)"/><rect x="-20" y="10" width="60" height="1.1" fill="url(#w21)" transform="translate(2.98 0)"/><rect x="-20" y="11" width="60" height="1.1" fill="url(#w21)" transform="translate(3.84 0)"/><rect x="-20" y="12" width="60" height="1.1" fill="url(#w21)" transform="translate(4.69 0)"/><rect x="-20" y="13" width="60" height="1.1" fill="url(#w21)" transform="translate(5.55 0)"/><rect x="-20" y="14" width="60" height="1.1" fill="url(#w21)" transform="translate(6.41 0)"/><rect x="-20" y="15" width="60" height="1.1" fill="url(#w21)" transform="translate(7.26 0)"/><rect x="-20" y="16" width="60" height="1.1" fill="url(#w21)" transform="translate(7.79 0)"/><rect x="-20" y="17" width="60" height="1.1" fill="url(#w21)" transform="translate(7.03 0)"/></g></svg></div>
<div class="mi" style="left:801.3px;top:794.3px">Zigzag 6</div>
<div class="ic" style="left:777px;top:814.9px;height:19px"><svg width="18" height="17" viewBox="0 0 18 18" preserveAspectRatio="none"><defs><linearGradient id="w22" gradientUnits="userSpaceOnUse" x1="0" y1="0" x2="12" y2="0"><stop offset="0" stop-color="#fff"/><stop offset=".1" stop-color="#f2f2f2"/><stop offset=".5" stop-color="#7e7e7e"/><stop offset=".9" stop-color="#0e0e0e"/><stop offset="1" stop-color="#000"/></linearGradient></defs><rect width="18" height="18" fill="#000"/><g shape-rendering="crispEdges"><rect x="-20" y="0" width="60" height="1.1" fill="url(#w22)" transform="translate(5.24 0)"/><rect x="-20" y="1" width="60" height="1.1" fill="url(#w22)" transform="translate(5.22 0)"/><rect x="-20" y="2" width="60" height="1.1" fill="url(#w22)" transform="translate(4.09 0)"/><rect x="-20" y="3" width="60" height="1.1" fill="url(#w22)" transform="translate(2.96 0)"/><rect x="-20" y="4" width="60" height="1.1" fill="url(#w22)" transform="translate(2.98 0)"/><rect x="-20" y="5" width="60" height="1.1" fill="url(#w22)" transform="translate(4.11 0)"/><rect x="-20" y="6" width="60" height="1.1" fill="url(#w22)" transform="translate(5.24 0)"/><rect x="-20" y="7" width="60" height="1.1" fill="url(#w22)" transform="translate(5.22 0)"/><rect x="-20" y="8" width="60" height="1.1" fill="url(#w22)" transform="translate(4.09 0)"/><rect x="-20" y="9" width="60" height="1.1" fill="url(#w22)" transform="translate(2.96 0)"/><rect x="-20" y="10" width="60" height="1.1" fill="url(#w22)" transform="translate(2.98 0)"/><rect x="-20" y="11" width="60" height="1.1" fill="url(#w22)" transform="translate(4.11 0)"/><rect x="-20" y="12" width="60" height="1.1" fill="url(#w22)" transform="translate(5.24 0)"/><rect x="-20" y="13" width="60" height="1.1" fill="url(#w22)" transform="translate(5.22 0)"/><rect x="-20" y="14" width="60" height="1.1" fill="url(#w22)" transform="translate(4.09 0)"/><rect x="-20" y="15" width="60" height="1.1" fill="url(#w22)" transform="translate(2.96 0)"/><rect x="-20" y="16" width="60" height="1.1" fill="url(#w22)" transform="translate(2.98 0)"/><rect x="-20" y="17" width="60" height="1.1" fill="url(#w22)" transform="translate(4.11 0)"/></g></svg></div>
<div class="mi" style="left:801.3px;top:818.3px">Zigzag 7</div>
<div class="ic" style="left:777px;top:838.9px;height:19px"><svg width="18" height="17" viewBox="0 0 18 18" preserveAspectRatio="none"><defs><linearGradient id="w23" gradientUnits="userSpaceOnUse" x1="0" y1="0" x2="12" y2="0"><stop offset="0" stop-color="#fff"/><stop offset=".1" stop-color="#f2f2f2"/><stop offset=".5" stop-color="#7e7e7e"/><stop offset=".9" stop-color="#0e0e0e"/><stop offset="1" stop-color="#000"/></linearGradient></defs><rect width="18" height="18" fill="#000"/><g shape-rendering="crispEdges"><rect x="-20" y="0" width="60" height="1.1" fill="url(#w23)" transform="translate(4.89 0)"/><rect x="-20" y="1" width="60" height="1.1" fill="url(#w23)" transform="translate(4.01 0)"/><rect x="-20" y="2" width="60" height="1.1" fill="url(#w23)" transform="translate(3.64 0)"/><rect x="-20" y="3" width="60" height="1.1" fill="url(#w23)" transform="translate(4.88 0)"/><rect x="-20" y="4" width="60" height="1.1" fill="url(#w23)" transform="translate(4.27 0)"/><rect x="-20" y="5" width="60" height="1.1" fill="url(#w23)" transform="translate(3.51 0)"/><rect x="-20" y="6" width="60" height="1.1" fill="url(#w23)" transform="translate(4.62 0)"/><rect x="-20" y="7" width="60" height="1.1" fill="url(#w23)" transform="translate(4.54 0)"/><rect x="-20" y="8" width="60" height="1.1" fill="url(#w23)" transform="translate(3.51 0)"/><rect x="-20" y="9" width="60" height="1.1" fill="url(#w23)" transform="translate(4.35 0)"/><rect x="-20" y="10" width="60" height="1.1" fill="url(#w23)" transform="translate(4.81 0)"/><rect x="-20" y="11" width="60" height="1.1" fill="url(#w23)" transform="translate(3.56 0)"/><rect x="-20" y="12" width="60" height="1.1" fill="url(#w23)" transform="translate(4.08 0)"/><rect x="-20" y="13" width="60" height="1.1" fill="url(#w23)" transform="translate(4.89 0)"/><rect x="-20" y="14" width="60" height="1.1" fill="url(#w23)" transform="translate(3.83 0)"/><rect x="-20" y="15" width="60" height="1.1" fill="url(#w23)" transform="translate(3.82 0)"/><rect x="-20" y="16" width="60" height="1.1" fill="url(#w23)" transform="translate(4.89 0)"/><rect x="-20" y="17" width="60" height="1.1" fill="url(#w23)" transform="translate(4.09 0)"/></g></svg></div>
<div class="mi" style="left:801.3px;top:842.3px">Zigzag 8</div>
<svg class="a" style="left:760px;top:794px" width="10" height="12" viewBox="0 0 10 12"><path d="M1.6 6.8L3.6 9.6L7.6 2.6" fill="none" stroke="#f4f4f4" stroke-width="1.5"/></svg>
</body></html>
